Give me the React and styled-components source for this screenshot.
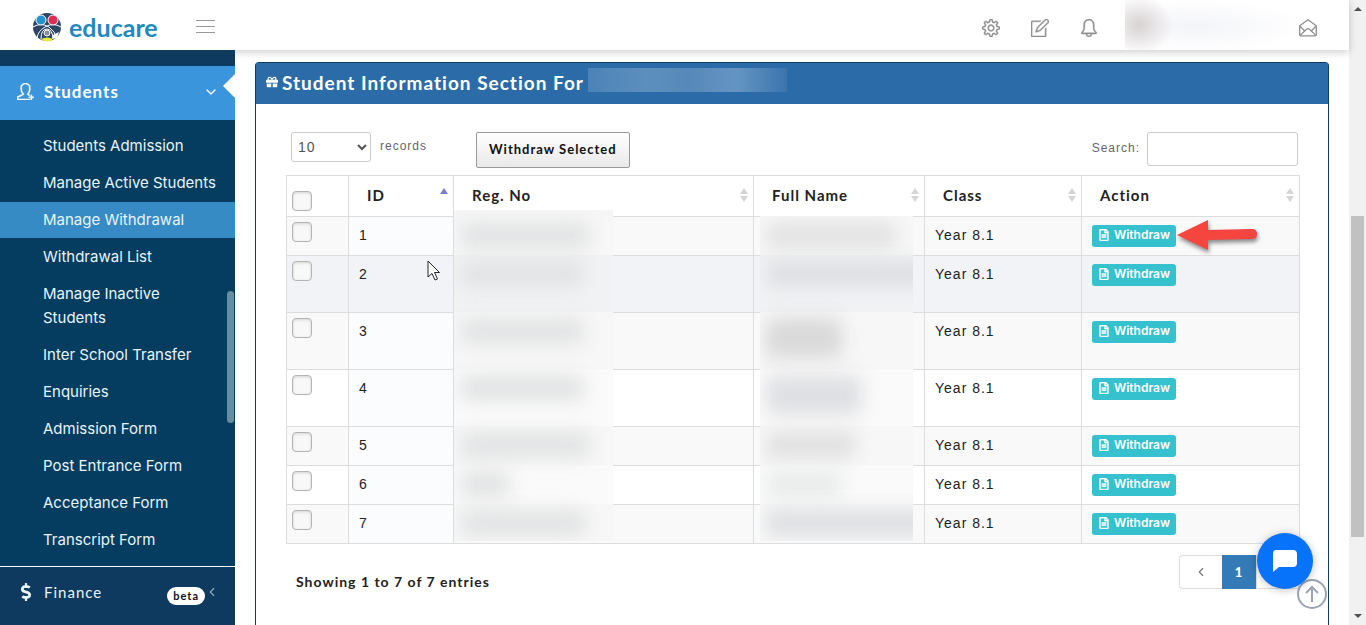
import React from "react";
import styled, { createGlobalStyle, css } from "styled-components";
import { SlSettings, SlNote, SlBell, SlUserFollow } from "react-icons/sl";
import { FaGift, FaDollarSign, FaRegFileAlt } from "react-icons/fa";
import { ChevronDown, ChevronLeft, ChevronRight } from "lucide-react";

const menuItems = [
  "Students Admission",
  "Manage Active Students",
  "Manage Withdrawal",
  "Withdrawal List",
  "Manage Inactive Students",
  "Inter School Transfer",
  "Enquiries",
  "Admission Form",
  "Post Entrance Form",
  "Acceptance Form",
  "Transcript Form",
];

const students = [
  { id: 1, className: "Year 8.1", reg: 130, name: 130, tone: "#e2e2e2" },
  { id: 2, className: "Year 8.1", reg: 124, name: 170, tone: "#dddfe2", tall: true, hovered: true },
  { id: 3, className: "Year 8.1", reg: 124, name: 76, tone: "#d9d9d9", tall: true },
  { id: 4, className: "Year 8.1", reg: 124, name: 96, tone: "#dfe0e3", tall: true },
  { id: 5, className: "Year 8.1", reg: 130, name: 90, tone: "#e0e0e0" },
  { id: 6, className: "Year 8.1", reg: 50, name: 76, tone: "#e9ebeb" },
  { id: 7, className: "Year 8.1", reg: 126, name: 170, tone: "#dddfe2" },
];

const Logo = () => (
  <LogoLink href="#" aria-label="educare">
    <svg width="30" height="30" viewBox="0 0 30 30">
      <circle cx="15" cy="15" r="14" fill="#2c4466" />
      <path d="M1 15Q9 10 17 15Q23 19 25 27" fill="none" stroke="#fff" strokeWidth="1" />
      <path d="M29 15Q21 10 13 15Q6 19 5 26" fill="none" stroke="#fff" strokeWidth="1" />
      <path d="M9 27Q9 17 15 17Q20 17 21 26" fill="none" stroke="#fff" strokeWidth="1" />
      <circle cx="9" cy="8" r="5" fill="#2492cf" stroke="#fff" strokeWidth="1" />
      <circle cx="21" cy="8" r="5" fill="#e02d55" stroke="#fff" strokeWidth="1" />
      <circle cx="15" cy="21" r="3" fill="#8c9199" stroke="#fff" strokeWidth="1" />
      <path d="M9 27Q15 24 21 27Q15 32 9 27" fill="#e8ed3c" />
      <path d="M21 23L27 20L25 26L20 27Z" fill="#fff" />
    </svg>
    <LogoText>educare</LogoText>
  </LogoLink>
);

const EnvelopeOpen = () => (
  <svg width="18" height="18" viewBox="0 0 18 18" fill="none" stroke="currentColor" strokeWidth="1.3">
    <path d="M.7 6.8L9 .8L17.3 6.8V15.5Q17.3 16.8 16 16.8H2Q.7 16.8 .7 15.5Z" />
    <path d="M.8 7L5.5 11.8M17.2 7L12.5 11.8M1.2 16.4L7.5 10.2Q9 9 10.5 10.2L16.8 16.4" />
  </svg>
);

const SortIcon = ({ ascending }) => (
  <svg width="10" height="16" viewBox="0 0 10 16">
    <path d="M5 1L9 7H1Z" fill={ascending ? "#7b7bd6" : "#d6d6d6"} />
    {!ascending && <path d="M5 15L9 9H1Z" fill="#d6d6d6" />}
  </svg>
);

const Redaction = ({ field }) => (
  <RedactionColumn $field={field} aria-hidden="true">
    {students.map((student) => (
      <RedactionRow key={student.id} $tall={student.tall} $hovered={student.hovered}>
        <Smudge
          $tone={field === "reg" ? "#e2e3e4" : student.tone}
          $double={field === "name" && (student.id === 3 || student.id === 4)}
          style={{ width: student[field] }}
        />
      </RedactionRow>
    ))}
  </RedactionColumn>
);

const App = () => {
  return (
    <>
      <GlobalStyle />
      <Window>
        <Page>
          <Header>
            <Logo />
            <MenuButton aria-label="Toggle menu">
              <span />
              <span />
              <span />
            </MenuButton>
            <HeaderIcons>
              <IconButton aria-label="Settings"><SlSettings /></IconButton>
              <IconButton aria-label="Notes"><SlNote /></IconButton>
              <IconButton aria-label="Notifications"><SlBell /></IconButton>
            </HeaderIcons>
            <Profile />
            <IconButton aria-label="Messages"><EnvelopeOpen /></IconButton>
          </Header>
          <Body>
            <Sidebar>
              <SidebarHeading href="#">
                <SlUserFollow size={17} stroke="currentColor" strokeWidth="30" />
                <span>Students</span>
                <ChevronDown size={16} />
              </SidebarHeading>
              <Submenu>
                {menuItems.map((item) => (
                  <li key={item}>
                    <MenuLink href="#" $active={item === "Manage Withdrawal"}>{item}</MenuLink>
                  </li>
                ))}
              </Submenu>
              <SidebarScroll />
              <FinanceLink href="#">
                <FaDollarSign size={18} />
                <span>Finance</span>
                <Beta>beta</Beta>
                <ChevronLeft size={14} color="#8fa9bd" />
              </FinanceLink>
            </Sidebar>
            <Main>
              <Panel>
                <PanelTitle>
                  <FaGift size={12} />
                  Student Information Section For
                  <TitleRedaction />
                </PanelTitle>
                <PanelBody>
                  <Toolbar>
                    <Records>
                      <Select id="records" defaultValue="10">
                        <option>10</option>
                        <option>25</option>
                      </Select>
                      <label htmlFor="records">records</label>
                    </Records>
                    <BulkButton>Withdraw Selected</BulkButton>
                    <Search>
                      <span>Search:</span>
                      <input type="text" />
                    </Search>
                  </Toolbar>
                  <TableWrap>
                    <Table>
                      <colgroup>
                        <Col $width="62px" />
                        <Col $width="105px" />
                        <Col />
                        <Col $width="171px" />
                        <Col $width="157px" />
                        <Col $width="218px" />
                      </colgroup>
                      <thead>
                        <tr>
                          <CheckHead><Checkbox type="checkbox" aria-label="Select all" /></CheckHead>
                          {["ID", "Reg. No", "Full Name", "Class", "Action"].map((title) => (
                            <Th key={title}>
                              <ThContent>
                                {title}
                                <SortIcon ascending={title === "ID"} />
                              </ThContent>
                            </Th>
                          ))}
                        </tr>
                      </thead>
                      <tbody>
                        {students.map((student) => (
                          <Row key={student.id} $tall={student.tall} $hovered={student.hovered}>
                            <CheckCell>
                              <Checkbox type="checkbox" aria-label={`Select student ${student.id}`} />
                            </CheckCell>
                            <Td $sorted={!student.hovered}>{student.id}</Td>
                            <Td />
                            <Td />
                            <Td>{student.className}</Td>
                            <Td>
                              <WithdrawButton>
                                <FaRegFileAlt size={12} />
                                Withdraw
                              </WithdrawButton>
                            </Td>
                          </Row>
                        ))}
                      </tbody>
                    </Table>
                    <Redaction field="reg" />
                    <Redaction field="name" />
                    <Arrow width="86" height="38" viewBox="0 0 86 38">
                      <path d="M3 17L34 2V12L78 11Q83 11 83 16Q83 21 78 21L34 22V32Z" fill="#f5453f" />
                    </Arrow>
                    <Cursor width="14" height="21" viewBox="0 0 14 21">
                      <path d="M1 1V17L5 13.5L8 20L10.5 19L7.5 12.5H12.5Z" fill="#fff" stroke="#222" strokeWidth="1" />
                    </Cursor>
                  </TableWrap>
                  <TableFooter>
                    <span>Showing 1 to 7 of 7 entries</span>
                    <Pagination>
                      <PageButton aria-label="Previous"><ChevronLeft size={14} /></PageButton>
                      <PageButton $current>1</PageButton>
                      <PageButton aria-label="Next"><ChevronRight size={14} /></PageButton>
                    </Pagination>
                  </TableFooter>
                </PanelBody>
              </Panel>
            </Main>
          </Body>
          <TopButton aria-label="Back to top">
            <svg width="30" height="30" viewBox="0 0 30 30" fill="none" stroke="#9ba3b5" strokeWidth="2">
              <circle cx="15" cy="15" r="14" fill="#fff" />
              <path d="M15 23V8M9 14L15 8L21 14" />
            </svg>
          </TopButton>
          <ChatButton aria-label="Open chat">
            <svg width="24" height="22" viewBox="0 0 24 22">
              <path d="M3 0H20Q24 0 24 4V13Q24 17 20 17H6L0 22V4Q0 0 3 0Z" fill="#fff" />
            </svg>
          </ChatButton>
        </Page>
        <ScrollTrack>
          <ScrollArrow />
          <ScrollThumb />
          <ScrollArrow $down />
        </ScrollTrack>
      </Window>
    </>
  );
};

const GlobalStyle = createGlobalStyle`
  * {
    box-sizing: border-box;
  }

  body {
    margin: 0;
    font-family: Lato, "Open Sans", sans-serif;
    font-size: 15px;
    color: #222;
    letter-spacing: 1px;
    overflow: hidden;
  }

  button, input, select {
    font: inherit;
    letter-spacing: inherit;
  }

  button {
    cursor: pointer;
  }
`;

const Window = styled.div`
  display: flex;
  height: 100vh;
`;

const Page = styled.div`
  flex: 1;
  min-width: 0;
  display: flex;
  flex-direction: column;
  background: #fff;
  position: relative;
`;

const Header = styled.header`
  height: 50px;
  flex-shrink: 0;
  display: flex;
  align-items: center;
  padding: 0 32px;
  background: #fff;
  box-shadow: 0 2px 8px rgba(0, 0, 0, 0.2);
  position: relative;
  z-index: 1;
`;

const LogoLink = styled.a`
  display: flex;
  align-items: center;
  gap: 7px;
  width: 164px;
  padding-top: 4px;
  text-decoration: none;
`;

const LogoText = styled.span`
  font-size: 25px;
  font-weight: 700;
  line-height: 30px;
  letter-spacing: normal;
  color: #2388bf;
`;

const MenuButton = styled.button`
  display: flex;
  flex-direction: column;
  gap: 5px;
  width: 19px;
  padding: 2px 0 0;
  border: none;
  background: none;

  span {
    height: 1px;
    background: #999;
  }
`;

const HeaderIcons = styled.div`
  display: flex;
  gap: 31px;
  margin-left: auto;
  margin-right: 27px;
`;

const IconButton = styled.button`
  display: flex;
  padding: 5px 0 0;
  border: none;
  background: none;
  color: #8f8f8f;
  font-size: 18px;

  svg[viewBox="0 0 1024 1024"] {
    stroke: currentColor;
    stroke-width: 24;
  }
`;

const Profile = styled.div`
  width: 174px;
  height: 50px;
  background:
    radial-gradient(ellipse 34px 30px at 14px 25px, #d8d3d3, transparent),
    radial-gradient(ellipse 110px 26px at 70px 26px, #f3f4f8, transparent);
`;

const Body = styled.div`
  flex: 1;
  min-height: 0;
  display: flex;
`;

const Sidebar = styled.nav`
  width: 235px;
  flex-shrink: 0;
  padding-top: 16px;
  background: #0f3a5f;
  position: relative;
  z-index: 2;
  overflow: hidden;
`;

const SidebarHeading = styled.a`
  height: 54px;
  display: flex;
  align-items: center;
  gap: 10px;
  padding: 0 16px 3px 17px;
  background: #3a95dc;
  color: #fff;
  font-size: 17px;
  font-weight: 700;
  text-decoration: none;
  position: relative;

  span {
    flex: 1;
  }

  &::after {
    content: "";
    position: absolute;
    right: 0;
    top: 8px;
    border: 12px solid transparent;
    border-left: none;
    border-right-color: #fff;
  }
`;

const Submenu = styled.ul`
  display: flex;
  flex-direction: column;
  gap: 1px;
  margin: 0;
  padding: 8px 0;
  list-style: none;
  background: #043d5f;
  border-bottom: 1px solid #fff;
`;

const MenuLink = styled.a`
  display: block;
  padding: 6px 12px 6px 43px;
  font-family: Inter, "Open Sans", sans-serif;
  line-height: 24px;
  letter-spacing: normal;
  color: #e8f4fa;
  text-decoration: none;
  background: ${({ $active }) => ($active ? "#368bc4" : "transparent")};
`;

const SidebarScroll = styled.div`
  position: absolute;
  top: 241px;
  right: 1px;
  width: 7px;
  height: 132px;
  border-radius: 4px;
  background: #688da3;
`;

const FinanceLink = styled.a`
  display: flex;
  align-items: center;
  height: 50px;
  padding: 0 16px 0 17px;
  color: #e8f4fa;
  text-decoration: none;

  span:first-of-type {
    flex: 1;
    padding-left: 9px;
  }
`;

const Beta = styled.span`
  padding: 0 6px;
  margin-top: 8px;
  border-radius: 9px;
  background: #fff;
  color: #111;
  font-size: 11px;
  font-weight: 700;
  line-height: 18px;
`;

const Main = styled.main`
  flex: 1;
  min-width: 0;
  display: flex;
  padding: 12px 20px 0;
`;

const Panel = styled.section`
  flex: 1;
  min-width: 0;
  border: 1px solid #0d3b63;
  border-bottom: none;
  border-radius: 4px 4px 0 0;
`;

const PanelTitle = styled.h1`
  display: flex;
  align-items: center;
  gap: 4px;
  height: 41px;
  margin: 0;
  padding: 0 10px 3px;
  background: #2b6ba8;
  color: #fff;
  font-size: 19px;
  font-weight: 700;
`;

const TitleRedaction = styled.span`
  width: 199px;
  height: 24px;
  margin-bottom: 4px;
  background: linear-gradient(90deg, #4b83b8, #5d8fbe 30%, #5688bb 50%, #6494c2 75%, #3a75ae);
`;

const PanelBody = styled.div`
  padding: 28px 28px 0 30px;
`;

const Toolbar = styled.div`
  display: flex;
  align-items: flex-start;
  height: 43px;
  padding-left: 5px;
  font-family: "Liberation Sans", Arial, sans-serif;
  font-size: 12px;
  color: #666;
`;

const Records = styled.div`
  display: flex;
  gap: 9px;
  width: 185px;
  line-height: 28px;
`;

const Select = styled.select`
  width: 80px;
  height: 30px;
  padding: 0 2px;
  border: 1px solid #ccc;
  border-radius: 3px;
  background: #fff;
  color: #555;
  font-size: 14px;
`;

const BulkButton = styled.button`
  height: 36px;
  padding: 0 12px 2px;
  border: 1px solid #999;
  border-radius: 2px;
  background: linear-gradient(#fff, #e9e9e9);
  color: #111;
  font-family: Lato, sans-serif;
  font-size: 13px;
  font-weight: 700;
`;

const Search = styled.label`
  display: flex;
  gap: 7px;
  margin-left: auto;
  margin-right: 2px;
  line-height: 32px;

  input {
    width: 151px;
    height: 34px;
    border: 1px solid #ccc;
    border-radius: 3px;
  }
`;

const TableWrap = styled.div`
  position: relative;
`;

const Table = styled.table`
  width: 100%;
  table-layout: fixed;
  border-collapse: collapse;
  font-size: 14px;
`;

const Col = styled.col`
  width: ${({ $width }) => $width || "auto"};
`;

const cellBorder = css`
  border: 1px solid #ddd;
`;

const Th = styled.th`
  ${cellBorder}
  height: 41px;
  padding: 0 4px 2px 18px;
  font-size: 15px;
  font-weight: 700;
  text-align: left;
`;

const ThContent = styled.div`
  display: flex;
  align-items: center;
  justify-content: space-between;
`;

const CheckHead = styled.th`
  ${cellBorder}
  padding: 10px 5px 0;
  text-align: left;
`;

const Row = styled.tr`
  height: ${({ $tall }) => ($tall ? "57px" : "39px")};
  background: ${({ $hovered }) => ($hovered ? "#f2f3f6" : "#fff")};

  &:nth-child(odd) {
    background: #f9f9f9;
  }
`;

const Td = styled.td`
  ${cellBorder}
  padding: 8px 10px;
  font-family: "Liberation Sans", Arial, sans-serif;
  line-height: 20px;
  vertical-align: top;
  background: ${({ $sorted }) => ($sorted ? "#fafcfe" : "transparent")};

  & + & + & {
    background: transparent;
  }
`;

const CheckCell = styled.td`
  ${cellBorder}
  padding: 5px;
  vertical-align: top;
`;

const Checkbox = styled.input`
  appearance: none;
  display: block;
  width: 20px;
  height: 20px;
  margin: 0;
  border: 1px solid #b4b4b4;
  border-radius: 4px;
  background: #f8f8f8;
  box-shadow: inset 0 1px 3px rgba(0, 0, 0, 0.15);
`;

const WithdrawButton = styled.button`
  display: flex;
  align-items: center;
  justify-content: center;
  gap: 4px;
  width: 84px;
  height: 22px;
  padding: 0 0 2px;
  border: none;
  border-radius: 3px;
  background: #36c1cf;
  color: #fff;
  font-family: Inter, sans-serif;
  font-size: 12px;
  font-weight: 600;
  letter-spacing: normal;

  svg {
    stroke: currentColor;
    stroke-width: 16;
  }
`;

const RedactionColumn = styled.div`
  position: absolute;
  top: ${({ $field }) => ($field === "reg" ? "35px" : "41px")};
  bottom: 3px;
  left: ${({ $field }) => ($field === "reg" ? "168px" : "auto")};
  right: ${({ $field }) => ($field === "reg" ? "auto" : "387px")};
  width: ${({ $field }) => ($field === "reg" ? "159px" : "153px")};
  padding-top: ${({ $field }) => ($field === "reg" ? "6px" : "0")};
  background: #f6f6f6;
  overflow: hidden;
`;

const RedactionRow = styled.div`
  height: ${({ $tall }) => ($tall ? "57px" : "39px")};
  padding-top: 6px;
  background: ${({ $hovered }) => ($hovered ? "#f1f2f4" : "#f7f7f7")};

  &:nth-child(4), &:nth-child(6) {
    background: #fafafa;
  }
`;

const Smudge = styled.div`
  height: ${({ $double }) => ($double ? "40px" : "26px")};
  margin-left: 6px;
  border-radius: 8px;
  background: ${({ $tone }) => $tone};
  filter: blur(9px);
`;

const Arrow = styled.svg`
  position: absolute;
  top: 43px;
  right: 40px;
  filter: drop-shadow(1px 3px 2px rgba(0, 0, 0, 0.45));
`;

const Cursor = styled.svg`
  position: absolute;
  top: 85px;
  left: 141px;
`;

const TableFooter = styled.div`
  display: flex;
  align-items: flex-start;
  justify-content: space-between;
  padding: 11px 1px 0 10px;
  font-size: 14px;
  font-weight: 700;
  line-height: 54px;
`;

const Pagination = styled.div`
  display: flex;
`;

const PageButton = styled.button`
  display: flex;
  align-items: center;
  justify-content: center;
  width: ${({ $current }) => ($current ? "34px" : "43px")};
  height: 34px;
  padding: 0;
  border: 1px solid ${({ $current }) => ($current ? "#337ab7" : "#ddd")};
  background: ${({ $current }) => ($current ? "#337ab7" : "#fff")};
  color: ${({ $current }) => ($current ? "#fff" : "#777")};
  font-size: 13px;
  font-weight: 900;

  &:first-child {
    border-radius: 4px 0 0 4px;
    border-right: none;
  }
`;

const ChatButton = styled.button`
  position: absolute;
  right: 36px;
  bottom: 36px;
  display: flex;
  align-items: center;
  justify-content: center;
  width: 56px;
  height: 56px;
  padding: 0;
  border: none;
  border-radius: 50%;
  background: #0773fb;
  box-shadow: 0 1px 8px rgba(0, 0, 0, 0.25);
`;

const TopButton = styled.button`
  position: absolute;
  right: 22px;
  bottom: 16px;
  display: flex;
  padding: 0;
  border: none;
  background: none;
`;

const ScrollTrack = styled.div`
  width: 17px;
  display: flex;
  flex-direction: column;
  align-items: center;
  justify-content: space-between;
  padding: 7px 0;
  background: #f1f1f1;
`;

const ScrollThumb = styled.div`
  width: 13px;
  height: 321px;
  margin-top: 128px;
  background: #c1c1c1;
`;

const ScrollArrow = styled.div`
  border: 4px solid transparent;
  ${({ $down }) => ($down ? "border-bottom: none; border-top-color: #505050;" : "border-top: none; border-bottom-color: #505050;")}
`;

export default App;
